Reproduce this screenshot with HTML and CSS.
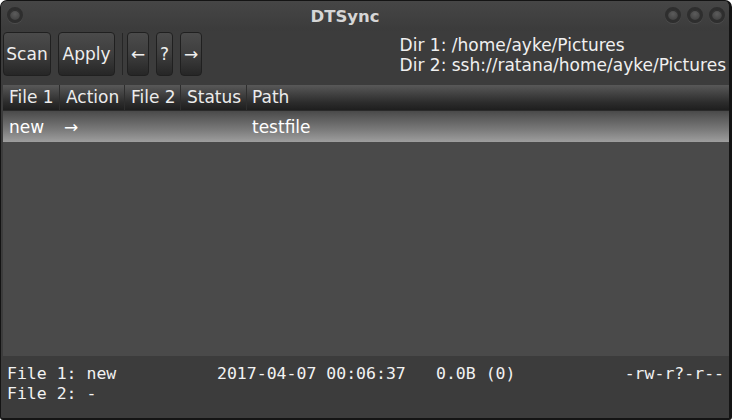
FILE: index.html
```html
<!DOCTYPE html>
<html>
<head>
<meta charset="utf-8">
<link rel="stylesheet" href="styles.css">
</head>
<body>
<div class="window">
  <div class="titlebar">
    <span class="orb orb-left"></span>
    <span class="title">DTSync</span>
    <span class="orbs"><span class="orb"></span><span class="orb"></span><span class="orb"></span></span>
  </div>
  <div class="toolbar">
    <button class="btn btn-scan">Scan</button>
    <button class="btn btn-apply">Apply</button>
    <span class="sep"></span>
    <button class="btn btn-small">←</button>
    <button class="btn btn-q">?</button>
    <button class="btn btn-small">→</button>
    <div class="dirs">
      <div>Dir 1: /home/ayke/Pictures</div>
      <div>Dir 2: ssh://ratana/home/ayke/Pictures</div>
    </div>
  </div>
  <div class="list">
    <div class="header">
      <div class="col c1">File 1</div>
      <div class="col c2">Action</div>
      <div class="col c3">File 2</div>
      <div class="col c4">Status</div>
      <div class="col c5">Path</div>
    </div>
    <div class="row selected">
      <div class="col c1">new</div>
      <div class="col c2">→</div>
      <div class="col c3"></div>
      <div class="col c4"></div>
      <div class="col c5">testfile</div>
    </div>
  </div>
  <div class="status">
    <div class="srow">
      <span class="s1">File 1: new</span>
      <span class="s2">2017-04-07 00:06:37</span>
      <span class="s3">0.0B (0)</span>
      <span class="s4">-rw-r?-r--</span>
    </div>
    <div class="srow">
      <span class="s1">File 2: -</span>
    </div>
  </div>
</div>
</body>
</html>
```
FILE: styles.css
```css
html, body {
  margin: 0;
  padding: 0;
  background: #ffffff;
}
.window {
  width: 732px;
  height: 420px;
  box-sizing: border-box;
  background: #3c3c3c;
  border: 1px solid #141414;
  border-right: 3px solid #141414;
  border-bottom: 2px solid #141414;
  border-radius: 7px 7px 3px 3px;
  display: flex;
  flex-direction: column;
  overflow: hidden;
  font-family: "DejaVu Sans", sans-serif;
  color: #ececec;
}
.titlebar {
  height: 30px;
  flex: none;
  position: relative;
  display: flex;
  align-items: center;
  justify-content: center;
  background: linear-gradient(#464646, #3b3b3b);
}
.title {
  font-weight: bold;
  font-size: 16.5px;
  color: #d6d6d6;
  margin-left: -40px;
}
.orb {
  display: inline-block;
  width: 16px;
  height: 16px;
  border-radius: 50%;
  box-sizing: border-box;
  border: 3px solid #2e2e2e;
  background: radial-gradient(circle at 50% 40%, #5c5c5c, #454545 70%);
  box-shadow: inset 0 1px 0 rgba(0,0,0,0.4), 0 1px 0 rgba(255,255,255,0.08);
}
.orb-left {
  position: absolute;
  left: 6px;
  top: 6px;
}
.orbs {
  position: absolute;
  right: 4px;
  top: 6px;
  display: flex;
  gap: 6px;
}
.toolbar {
  height: 46px;
  flex: none;
  display: flex;
  align-items: center;
  padding-left: 2px;
  gap: 7px;
}
.btn {
  height: 44px;
  box-sizing: border-box;
  border: 1px solid #202020;
  border-radius: 4px;
  background: linear-gradient(#4b4b4b, #3e3e3e 50%, #262626);
  color: #eeeeee;
  font-family: "DejaVu Sans", sans-serif;
  font-size: 17px;
  padding: 0;
  margin: 0;
}
.btn-scan { width: 48px; }
.btn-apply { width: 57px; }
.btn-small { width: 22px; }
.btn-q { width: 17px; }
.sep {
  width: 1px;
  height: 42px;
  background: #262626;
  margin-right: -3px;
}
.dirs {
  margin-left: auto;
  padding-right: 3px;
  font-size: 17px;
  line-height: 20px;
  color: #f0f0f0;
  margin-top: 2px;
}
.list {
  flex: 1;
  margin: 8px 0 0 2px;
  background: #4a4a4a;
}
.header, .row {
  display: flex;
  font-size: 17px;
}
.header {
  height: 26px;
  background: linear-gradient(#585858, #2c2c2c 70%, #1e1e1e);
  border-bottom: 1px solid #2a2a2a;
  box-sizing: border-box;
  align-items: center;
}
.header .col {
  border-right: 1px solid #2e2e2e;
  height: 100%;
  line-height: 25px;
  box-sizing: border-box;
}
.header .col.c5 { border-right: none; }
.col {
  padding-left: 6px;
  box-sizing: border-box;
  white-space: nowrap;
}
.c1 { width: 57px; }
.c2 { width: 65px; }
.c3 { width: 56px; }
.c4 { width: 66px; }
.c5 { flex: 1; padding-left: 5px; }
.row {
  height: 31px;
  align-items: center;
}
.row.selected {
  background: linear-gradient(#4a4a4a, #7a7a7a 60%, #9e9e9e);
  color: #ffffff;
}
.row .c2 { padding-left: 4px; }
.status {
  height: 62px;
  flex: none;
  padding: 8px 5px 0 6px;
  box-sizing: border-box;
  font-family: "DejaVu Sans Mono", monospace;
  font-size: 16.5px;
  line-height: 20px;
  color: #f2f2f2;
}
.srow {
  display: flex;
  white-space: pre;
}
.s1 { width: 210px; }
.s2 { width: 219px; }
.s4 { margin-left: auto; }
```
